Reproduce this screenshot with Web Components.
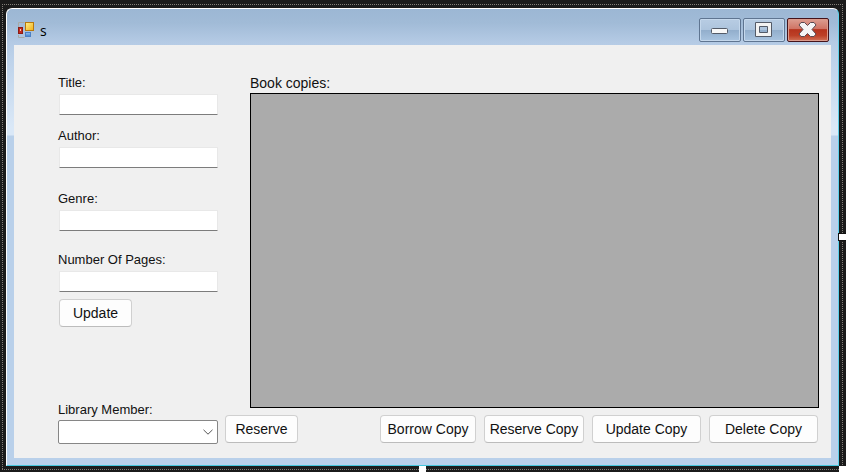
<!DOCTYPE html>
<html lang="en">
<head>
<meta charset="utf-8">
<title>s</title>
<style>
html, body { margin: 0; height: 100%; }
body { font: 13px/16px "Liberation Sans", Arial, sans-serif; color: #111; background: #1b1b1b; }
</style>
</head>
<body>
<form-designer>
  <app-window caption="s">
    <book-form></book-form>
  </app-window>
</form-designer>
<script>
const define = (name, html, setup) => {
  const template = document.createElement('template');
  template.innerHTML = html;
  customElements.define(name, class extends HTMLElement {
    constructor() {
      super();
      this.attachShadow({ mode: 'open' }).append(template.content.cloneNode(true));
    }
    connectedCallback() { if (setup) setup(this, this.shadowRoot); }
  });
};

define('form-designer', `
<style>
:host { display: block; box-sizing: border-box; height: 100vh; padding: 4px 3px 2px 2px; background: #1b1b1b; }
.selection {
  position: relative; box-sizing: border-box; height: 100%; padding: 4px;
  background:
    repeating-linear-gradient(90deg, #827e78 0 1px, #1b1b1b 1px 2px) top / 100% 1px no-repeat,
    repeating-linear-gradient(90deg, #827e78 0 1px, #1b1b1b 1px 2px) bottom / 100% 1px no-repeat,
    repeating-linear-gradient(#827e78 0 1px, #1b1b1b 1px 2px) left / 1px 100% no-repeat,
    repeating-linear-gradient(#827e78 0 1px, #1b1b1b 1px 2px) right / 1px 100% no-repeat;
}
.handle { position: absolute; width: 7px; height: 6px; background: #fff; }
.e { right: -3px; top: calc(50% - 3px); box-shadow: 0 0 0 1px #111; }
.s { bottom: -2px; left: calc(50% - 4px); }
.se { bottom: -2px; right: -3px; }
</style>
<div class="selection"><slot></slot><i class="handle e"></i><i class="handle s"></i><i class="handle se"></i></div>`);

define('app-window', `
<style>
:host {
  display: flex; flex-direction: column; box-sizing: border-box; height: 100%;
  border: 1px solid #fff; border-right-color: #5cd0ea; border-bottom-color: #45c6dc;
  border-radius: 6px 6px 0 0; padding: 0 7px 7px;
  background: linear-gradient(#9cb7d4 0, #a1bbd7 14px, #b5cbe5 34px, #bdd2ea 50px, #dae8f7 118px, #dae8f7 126px, #b9d0ea 127px);
}
header { display: flex; align-items: center; height: 36px; padding: 0 2px 0 4px; }
.icon { flex: none; width: 16px; height: 16px; margin: 6px 6px 0 0; }
h1 { flex: 1; margin: 8px 0 0; font: 14px/16px "Open Sans", "Noto Sans", sans-serif; color: #000; }
nav { display: flex; gap: 2px; padding-top: 6px; }
main { flex: 1; min-height: 0; background: #f0f0f0; }
</style>
<header>
  <svg class="icon" viewBox="0 0 16 16" aria-hidden="true">
    <defs>
      <linearGradient id="y" x2="1" y2="1"><stop stop-color="#fff08a"/><stop offset="1" stop-color="#f0b01a"/></linearGradient>
      <linearGradient id="b" x2="0" y2="1"><stop stop-color="#98c4f4"/><stop offset="1" stop-color="#3c7ecb"/></linearGradient>
    </defs>
    <path d="M.5 5V.5h6M.5 13v2.500h6" fill="none" stroke="#a8aaa6"/>
    <rect x=".5" y="5.500" width="4" height="6" fill="#c42a1c" stroke="#8c1b13"/>
    <rect x="2" y="7" width="1" height="2" fill="#ffc6b0"/>
    <rect x="7.500" y=".5" width="8" height="8" fill="url(#y)" stroke="#b8780c"/>
    <rect x="7.500" y="10.500" width="5" height="4" fill="url(#b)" stroke="#4c80c2"/>
  </svg>
  <h1></h1>
  <nav>
    <caption-button kind="minimize"></caption-button>
    <caption-button kind="maximize"></caption-button>
    <caption-button kind="close"></caption-button>
  </nav>
</header>
<main><slot></slot></main>`, (host, root) => {
  root.querySelector('h1').textContent = host.getAttribute('caption');
});

const glyphs = {
  minimize: '<rect x="11.500" y="9.500" width="16" height="5" rx="1" fill="#f8f8f8" stroke="#545b68"/>',
  maximize: '<path fill-rule="evenodd" d="M11.500 3.500h16v14h-16zM15.500 7.500v6h8v-6z" fill="#f3f3f3" stroke="#545b68"/>',
  close: '<path d="M13 3.500h3.500l3 3 3-3H26l2 2.500-4 4.500 4 4.500-2 2.500h-3.500l-3-3-3 3H13L11 15l4-4.500L11 6z" fill="#f5f5f5" stroke="#5b4a50" stroke-linejoin="round"/>'
};
define('caption-button', `
<style>
:host { display: block; }
button {
  display: block; box-sizing: border-box; width: 42px; height: 24px; padding: 0;
  border: 1px solid #5f7591; border-radius: 2px; box-shadow: inset 0 0 0 1px #c5d8ec;
  background: linear-gradient(#b6cbe2 0 2px, #adc4dd 48%, #91adcb 49%, #a9c4e0);
}
:host([kind=close]) button {
  border-color: #44131a; box-shadow: inset 0 0 0 1px #dc9b8c;
  background: linear-gradient(#dc9e91, #cf7263 46%, #b5331d 48%, #bd4027 75%, #d17358);
}
svg { display: block; width: 40px; height: 22px; }
</style>
<button type="button"><svg viewBox="0 0 40 22" aria-hidden="true"></svg></button>`, (host, root) => {
  const kind = host.getAttribute('kind');
  root.querySelector('button').setAttribute('aria-label', kind);
  root.querySelector('svg').innerHTML = glyphs[kind];
});

define('push-button', `
<style>
:host { display: block; width: 73px; }
:host([size=m]) { width: 96px; }
:host([size=l]) { width: 100px; }
:host([size=xl]) { width: 109px; }
button {
  box-sizing: border-box; display: block; width: 100%; height: 28px; padding: 0;
  font: 14px/16px "Liberation Sans", Arial, sans-serif; color: inherit; white-space: nowrap; background: #fdfdfd;
  border: 1px solid #d0d0d0; border-bottom-color: #bcbcbc; border-radius: 4px;
}
</style>
<button type="button"><slot></slot></button>`);

define('text-field', `
<style>
:host { display: block; }
label { display: block; height: 19px; }
input {
  display: block; box-sizing: border-box; width: calc(100% - 1px); height: 21px; margin: 0 0 0 1px; padding: 0 4px;
  font: inherit; background: #fff; border: 1px solid #e8e8e8; border-bottom-color: #7c7c7c; border-radius: 1px; outline: 0;
}
</style>
<label for="field"></label><input id="field" type="text">`, (host, root) => {
  root.querySelector('label').textContent = host.getAttribute('label');
});

define('combo-box', `
<style>
:host { display: block; }
label { display: block; height: 18px; }
.box { display: grid; }
.box > * { grid-area: 1 / 1; }
select {
  appearance: none; box-sizing: border-box; width: 100%; height: 24px; padding: 0 24px 0 4px;
  font: inherit; background: #fff; border: 1px solid #868686; border-radius: 2px; outline: 0;
}
svg { justify-self: end; align-self: center; width: 10px; height: 6px; margin-right: 5px; pointer-events: none; z-index: 1; }
</style>
<label for="field"></label>
<div class="box"><select id="field"><option></option></select>
<svg viewBox="0 0 10 6" aria-hidden="true"><path d="M.5.800 5 5.200 9.500.800" fill="none" stroke="#555"/></svg></div>`, (host, root) => {
  root.querySelector('label').textContent = host.getAttribute('label');
});

define('data-view', `
<style>
:host { display: flex; flex-direction: column; }
h2 { margin: 0; height: 18px; font: 14px/16px "Liberation Sans", Arial, sans-serif; }
.rows { flex: 1; background: #ababab; border: 1px solid #000; }
</style>
<h2><slot></slot></h2><div class="rows" role="region"></div>`);

define('book-form', `
<style>
:host {
  box-sizing: border-box; height: 100%; padding: 30px 12px 14px 44px;
  display: grid; grid-template-columns: 160px 7px 25px minmax(0, 1fr);
  grid-template-rows: minmax(0, 1fr) 29px; row-gap: 7px;
}
.fields { grid-area: 1 / 1 / 3 / 2; display: flex; flex-direction: column; }
.fields > :nth-child(2) { margin-top: 13px; }
.fields > :nth-child(3) { margin-top: 23px; }
.fields > :nth-child(4) { margin-top: 21px; }
push-button { flex: none; }
.fields > push-button { margin: 7px 0 0 1px; }
combo-box { margin-top: auto; }
data-view { grid-area: 1 / 4; }
.actions { grid-area: 2 / 3 / 3 / 5; display: flex; gap: 8px; padding-right: 1px; }
.actions > :first-child { margin-right: auto; }
</style>
<div class="fields">
  <text-field label="Title:"></text-field>
  <text-field label="Author:"></text-field>
  <text-field label="Genre:"></text-field>
  <text-field label="Number Of Pages:"></text-field>
  <push-button>Update</push-button>
  <combo-box label="Library Member:"></combo-box>
</div>
<data-view>Book copies:</data-view>
<div class="actions">
  <push-button>Reserve</push-button>
  <push-button size="m">Borrow Copy</push-button>
  <push-button size="l">Reserve Copy</push-button>
  <push-button size="xl">Update Copy</push-button>
  <push-button size="xl">Delete Copy</push-button>
</div>`);
</script>
</body>
</html>
